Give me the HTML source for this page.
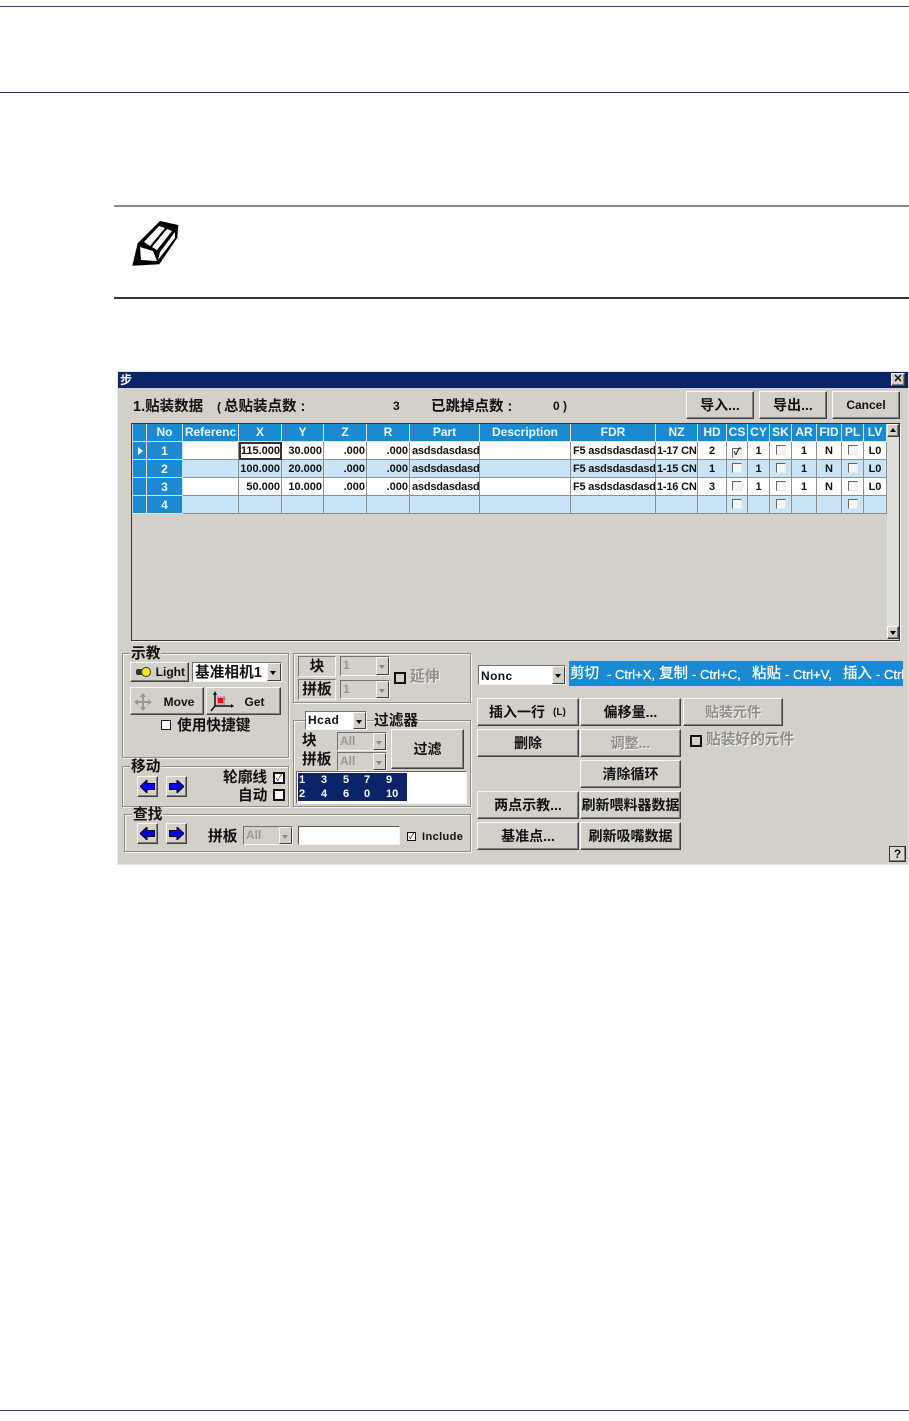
<!DOCTYPE html>
<html><head><meta charset="utf-8"><style>
html,body{margin:0;padding:0;background:#fff}
body{width:909px;height:1421px;position:relative;overflow:hidden;font-family:"Liberation Sans","Noto Sans CJK SC",sans-serif;color:#111}
.a,.t,.b,.sel,.cb,.g{position:absolute}
.t{white-space:nowrap;font-size:14.7px;line-height:16px}
.b{background:#d4d0c8;border:1px solid;border-color:#f8f8f4 #404040 #404040 #f8f8f4;box-shadow:inset -1px -1px 0 #808080;box-sizing:border-box;text-align:center;white-space:nowrap;font-size:14px;font-weight:bold;display:flex;align-items:center;justify-content:center;overflow:hidden}
.dis{color:#8f8d88;text-shadow:1px 1px 0 #f4f4f0}
.sel{background:#fff;border:1px solid;border-color:#707070 #f4f4f0 #f4f4f0 #707070;box-sizing:border-box;font-size:12px;font-weight:bold;line-height:17px;padding-left:2px;white-space:nowrap;overflow:hidden}
.sel.off{background:#d4d0c8;color:#99978f}
.sel i{position:absolute;right:0;top:0;bottom:0;width:13px;background:#d4d0c8;border:1px solid;border-color:#f4f4f0 #404040 #404040 #f4f4f0;box-sizing:border-box}
.sel i:after{content:"";position:absolute;left:2px;top:50%;margin-top:-1px;border:3px solid transparent;border-top:4px solid #000;border-bottom:0}
.sel.off i:after{border-top-color:#888}
.cb{width:10px;height:10px;border:2px solid #111;background:#fff;box-sizing:content-box}
.g{border:1px solid #8d8b85;box-shadow:1px 1px 0 #f4f4f0,inset 1px 1px 0 #f4f4f0;box-sizing:border-box}
table{position:absolute;left:133px;top:424px;border-collapse:separate;border-spacing:0;table-layout:fixed;width:754px;font-size:11px;font-weight:bold}
td{height:16px;padding:1px 0 0;border-right:1px solid #8a8f92;border-bottom:1px solid #8a8f92;white-space:nowrap;overflow:hidden;text-align:center;background:#fff;line-height:16px}
tr.h td{background:#1b8ad0;color:#eaf6ff;font-size:12px;border-color:#d4e4ee;height:17px;padding-top:0;line-height:17px}
tr.l td{background:#c9e4f4}
td.n{background:#1b8ad0!important;color:#eaf6ff;border-color:#d4e4ee;font-size:12px}
td.r{text-align:right;padding-right:1px}
td.s{text-align:left;padding-left:2px;font-size:11px;letter-spacing:-.2px}
.k{display:inline-block;width:8px;height:8px;border:1px solid;border-color:#666 #e8e8e8 #e8e8e8 #666;background:#f6f6f4;vertical-align:-1px;font-size:10px;line-height:8px;color:#222}
.w{position:absolute;top:1px;color:#fff;font-size:14.5px;line-height:25px;white-space:nowrap;-webkit-text-stroke:.3px #fff}
.w2{position:absolute;top:1px;color:#fff;font-size:13px;line-height:25px;white-space:nowrap;-webkit-text-stroke:.3px #fff}
</style></head><body>
<div class="a" style="left:0;top:6px;width:909px;height:1px;background:#3b3f7c"></div>
<div class="a" style="left:0;top:92px;width:909px;height:1px;background:#2c3070"></div>
<div class="a" style="left:0;top:1410px;width:909px;height:1px;background:#3b3f7c"></div>
<div class="a" style="left:114px;top:205px;width:795px;height:2px;background:#8a8a8a"></div>
<div class="a" style="left:114px;top:297px;width:795px;height:2px;background:#333"></div>

<svg class="a" style="left:125px;top:215px" width="60" height="58" viewBox="125 215 60 58">
<path d="M132.300 265.700L137.700 243.300L160 221L178.300 225L177.300 237.700L159.300 264.300Z" fill="#000"/>
<path d="M144 242L159 226L165 228L150 246Z M152 247L167 229L172 231L157 250Z M160 252L175 232L175 238L158 260Z M140 247L153 251L157 261L141 260Z" fill="#fff"/>
</svg>

<!-- window -->
<div class="a" style="left:117px;top:371px;width:792px;height:494px;background:#d4d0c8;box-shadow:inset 0 0 0 1px #e8e6e0"></div>
<div class="a" style="left:118px;top:372px;width:790px;height:16px;background:#0a2468"></div>
<div class="t" style="left:120px;top:372px;color:#fff;font-size:12px;font-weight:bold">步</div>
<div class="b" style="left:891px;top:373px;width:14px;height:13px;font-size:11px;line-height:11px">✕</div>

<div class="t" style="left:133px;top:399px;font-weight:bold;font-size:14.500px">1.贴装数据</div>
<div class="t" style="left:217px;top:399px;font-weight:bold;font-size:12px">(</div>
<div class="t" style="left:224px;top:399px;font-weight:bold;font-size:14.500px">总贴装点数 :</div>
<div class="t" style="left:393px;top:398px;font-weight:bold;font-size:12px">3</div>
<div class="t" style="left:431px;top:399px;font-weight:bold;font-size:14.500px">已跳掉点数 :</div>
<div class="t" style="left:553px;top:398px;font-weight:bold;font-size:12px">0 )</div>
<div class="b" style="left:686px;top:391px;width:68px;height:28px">导入...</div>
<div class="b" style="left:759px;top:391px;width:68px;height:28px">导出...</div>
<div class="b" style="left:832px;top:391px;width:68px;height:28px;font-size:12px">Cancel</div>

<!-- grid -->
<div class="a" style="left:131px;top:423px;width:769px;height:218px;border:1px solid #333;box-sizing:border-box;box-shadow:1px 1px 0 #f4f4f0"></div>
<table><colgroup><col style="width:14px"><col style="width:36px"><col style="width:56px"><col style="width:43px"><col style="width:42px"><col style="width:43px"><col style="width:43px"><col style="width:70px"><col style="width:91px"><col style="width:85px"><col style="width:42px"><col style="width:29px"><col style="width:21px"><col style="width:22px"><col style="width:22px"><col style="width:25px"><col style="width:25px"><col style="width:22px"><col style="width:23px"></colgroup>
<tr class="h"><td></td><td>No</td><td>Referenc</td><td>X</td><td>Y</td><td>Z</td><td>R</td><td>Part</td><td>Description</td><td>FDR</td><td>NZ</td><td>HD</td><td>CS</td><td>CY</td><td>SK</td><td>AR</td><td>FID</td><td>PL</td><td>LV</td></tr>
<tr><td class="n"></td><td class="n">1</td><td></td><td class="r" style="outline:2px solid #333;outline-offset:-2px">115.000</td><td class="r">30.000</td><td class="r">.000</td><td class="r">.000</td><td class="s">asdsdasdasd</td><td></td><td class="s">F5 asdsdasdasd</td><td class="s" style="padding-left:1px">1-17 CN</td><td>2</td><td><span class="k">✓</span></td><td>1</td><td><span class="k"></span></td><td>1</td><td>N</td><td><span class="k"></span></td><td>L0</td></tr>
<tr class="l"><td class="n"></td><td class="n">2</td><td></td><td class="r">100.000</td><td class="r">20.000</td><td class="r">.000</td><td class="r">.000</td><td class="s">asdsdasdasd</td><td></td><td class="s">F5 asdsdasdasd</td><td class="s" style="padding-left:1px">1-15 CN</td><td>1</td><td><span class="k"></span></td><td>1</td><td><span class="k"></span></td><td>1</td><td>N</td><td><span class="k"></span></td><td>L0</td></tr>
<tr><td class="n"></td><td class="n">3</td><td></td><td class="r">50.000</td><td class="r">10.000</td><td class="r">.000</td><td class="r">.000</td><td class="s">asdsdasdasd</td><td></td><td class="s">F5 asdsdasdasd</td><td class="s" style="padding-left:1px">1-16 CN</td><td>3</td><td><span class="k"></span></td><td>1</td><td><span class="k"></span></td><td>1</td><td>N</td><td><span class="k"></span></td><td>L0</td></tr>
<tr class="l"><td class="n"></td><td class="n">4</td><td></td><td></td><td></td><td></td><td></td><td></td><td></td><td></td><td></td><td></td><td><span class="k"></span></td><td></td><td><span class="k"></span></td><td></td><td></td><td><span class="k"></span></td><td></td></tr>
</table>
<div class="a" style="left:138px;top:447px;border:4px solid transparent;border-left:5px solid #fff;border-right:0"></div>
<!-- scrollbar -->
<div class="a" style="left:887px;top:424px;width:12px;height:215px;background:#e0ded9"></div>
<div class="b" style="left:887px;top:424px;width:12px;height:13px"></div>
<div class="b" style="left:887px;top:626px;width:12px;height:13px"></div>
<div class="a" style="left:890px;top:428px;border:3px solid transparent;border-bottom:4px solid #000;border-top:0"></div>
<div class="a" style="left:890px;top:631px;border:3px solid transparent;border-top:4px solid #000;border-bottom:0"></div>

<!-- 示教 group -->
<div class="g" style="left:122px;top:653px;width:167px;height:105px"></div>
<div class="t" style="left:130px;top:646px;background:#d4d0c8;font-weight:bold;padding:0 1px">示教</div>
<div class="b" style="left:130px;top:662px;width:59px;height:20px;font-size:12px;justify-content:flex-end;padding-right:3px">Light</div>
<div class="a" style="left:136px;top:669px;width:7px;height:6px;background:#333;border-radius:2px"></div>
<div class="a" style="left:141px;top:667px;width:10px;height:10px;background:#f2ea10;border-radius:50%;border:1px solid #333;box-sizing:border-box"></div>
<div class="sel" style="left:192px;top:662px;width:90px;height:20px;font-size:14.700px;line-height:20px;padding-left:2px">基准相机1<i style="width:14px"></i></div>
<div class="b" style="left:130px;top:687px;width:74px;height:28px;font-size:12px;padding:1px 0 0 24px">Move</div>
<svg class="a" style="left:134px;top:693px" width="18" height="18" viewBox="0 0 18 18" fill="none" stroke="#9a9892" stroke-width="2"><path d="M9 2V16M2 9H16"/><path d="M9 0L6 4H12ZM9 18L6 14H12ZM0 9L4 6V12ZM18 9L14 6V12Z" fill="#9a9892" stroke="none"/></svg>
<div class="b" style="left:206px;top:687px;width:75px;height:28px;font-size:12px;padding:1px 0 0 22px">Get</div>
<svg class="a" style="left:210px;top:691px" width="24" height="22" viewBox="0 0 24 22" fill="none" stroke="#111" stroke-width="1.5"><path d="M5 2V15L1 20M5 15H21"/><path d="M21 13L24 15L21 17ZM3 4L5 0L7 4Z" fill="#111" stroke="none"/><path d="M8 5V14M11 5V14M14 5V14M7 8H16" stroke="#777" stroke-width="1"/><rect x="8" y="7" width="5" height="5" fill="#f00" stroke="none"/></svg>
<div class="cb" style="left:161px;top:720px;width:8px;height:8px;border-width:1.500px"></div>
<div class="t" style="left:177px;top:718px;font-weight:bold">使用快捷键</div>

<!-- 移动 group -->
<div class="g" style="left:122px;top:766px;width:167px;height:41px"></div>
<div class="t" style="left:130px;top:759px;background:#d4d0c8;font-weight:bold;padding:0 1px">移动</div>
<div class="b" style="left:137px;top:776px;width:21px;height:21px;font-size:0"><svg width="15" height="13" viewBox="0 0 15 13"><path d="M0 6.500L7 0V3.500H15V9.500H7V13Z" fill="#0000e0" stroke="#000"/></svg></div>
<div class="b" style="left:166px;top:776px;width:21px;height:21px;font-size:0"><svg width="15" height="13" viewBox="0 0 15 13"><path d="M15 6.500L8 0V3.500H0V9.500H8V13Z" fill="#0000e0" stroke="#000"/></svg></div>
<div class="t" style="left:223px;top:770px;font-weight:bold">轮廓线</div>
<div class="cb" style="left:273px;top:772px;width:8px;height:8px;font-size:9px;line-height:8px;text-align:center">✓</div>
<div class="t" style="left:238px;top:788px;font-weight:bold">自动</div>
<div class="cb" style="left:273px;top:789px;width:8px;height:8px"></div>

<!-- 查找 group -->
<div class="g" style="left:124px;top:814px;width:347px;height:38px"></div>
<div class="t" style="left:132px;top:807px;background:#d4d0c8;font-weight:bold;padding:0 1px">查找</div>
<div class="b" style="left:137px;top:823px;width:21px;height:21px;font-size:0"><svg width="15" height="13" viewBox="0 0 15 13"><path d="M0 6.500L7 0V3.500H15V9.500H7V13Z" fill="#0000e0" stroke="#000"/></svg></div>
<div class="b" style="left:166px;top:823px;width:21px;height:21px;font-size:0"><svg width="15" height="13" viewBox="0 0 15 13"><path d="M15 6.500L8 0V3.500H0V9.500H8V13Z" fill="#0000e0" stroke="#000"/></svg></div>
<div class="t" style="left:208px;top:829px;font-weight:bold">拼板</div>
<div class="sel off" style="left:243px;top:826px;width:50px;height:19px">All<i></i></div>
<div class="a" style="left:298px;top:826px;width:102px;height:19px;background:#fff;border:1px solid;border-color:#555 #f4f4f0 #f4f4f0 #555;box-sizing:border-box"></div>
<div class="cb" style="left:407px;top:832px;width:7px;height:7px;border-width:1.500px;font-size:8px;line-height:7px;text-align:center">✓</div>
<div class="t" style="left:422px;top:829px;font-size:11px;font-weight:bold;letter-spacing:.4px">Include</div>

<!-- 块 group -->
<div class="g" style="left:293px;top:653px;width:178px;height:50px"></div>
<div class="a" style="left:298px;top:656px;width:38px;height:21px;border:1px solid;border-color:#777 #f4f4f0 #f4f4f0 #777;box-sizing:border-box;text-align:center;font-size:14.700px;font-weight:bold;line-height:20px">块</div>
<div class="a" style="left:298px;top:679px;width:38px;height:21px;border:1px solid;border-color:#777 #f4f4f0 #f4f4f0 #777;box-sizing:border-box;text-align:center;font-size:14.700px;font-weight:bold;line-height:20px">拼板</div>
<div class="sel off" style="left:340px;top:656px;width:50px;height:20px;font-size:12px">1<i></i></div>
<div class="sel off" style="left:340px;top:680px;width:50px;height:19px;font-size:12px">1<i></i></div>
<div class="cb" style="left:394px;top:672px;width:8px;height:8px;background:none"></div>
<div class="t dis" style="left:410px;top:669px;font-weight:bold">延伸</div>

<!-- 过滤器 group -->
<div class="g" style="left:293px;top:720px;width:178px;height:87px"></div>
<div class="sel" style="left:305px;top:711px;width:62px;height:19px;letter-spacing:.5px">Hcad<i></i></div>
<div class="t" style="left:374px;top:713px;background:#d4d0c8;font-weight:bold">过滤器</div>
<div class="t" style="left:302px;top:733px;font-weight:bold">块</div>
<div class="t" style="left:302px;top:752px;font-weight:bold">拼板</div>
<div class="sel off" style="left:337px;top:732px;width:50px;height:19px">All<i></i></div>
<div class="sel off" style="left:337px;top:752px;width:50px;height:19px">All<i></i></div>
<div class="b" style="left:391px;top:729px;width:73px;height:40px">过滤</div>
<div class="a" style="left:296px;top:771px;width:171px;height:33px;background:#fff;border:1px solid;border-color:#666 #f4f4f0 #f4f4f0 #666;box-sizing:border-box"></div>
<div class="a" style="left:298px;top:773px;width:109px;height:28px;background:#0a2468"></div>
<div class="t" style="left:299px;top:773px;color:#fff;font-size:11px;font-weight:bold;line-height:14px">1</div><div class="t" style="left:321px;top:773px;color:#fff;font-size:11px;font-weight:bold;line-height:14px">3</div><div class="t" style="left:343px;top:773px;color:#fff;font-size:11px;font-weight:bold;line-height:14px">5</div><div class="t" style="left:364px;top:773px;color:#fff;font-size:11px;font-weight:bold;line-height:14px">7</div><div class="t" style="left:386px;top:773px;color:#fff;font-size:11px;font-weight:bold;line-height:14px">9</div>
<div class="t" style="left:299px;top:787px;color:#fff;font-size:11px;font-weight:bold;line-height:14px">2</div><div class="t" style="left:321px;top:787px;color:#fff;font-size:11px;font-weight:bold;line-height:14px">4</div><div class="t" style="left:343px;top:787px;color:#fff;font-size:11px;font-weight:bold;line-height:14px">6</div><div class="t" style="left:364px;top:787px;color:#fff;font-size:11px;font-weight:bold;line-height:14px">0</div><div class="t" style="left:386px;top:787px;color:#fff;font-size:11px;font-weight:bold;line-height:14px">10</div>

<!-- right side -->
<div class="sel" style="left:478px;top:665px;width:88px;height:20px;letter-spacing:.4px;line-height:20px">Nonc<i></i></div>
<div class="a" style="left:569px;top:661px;width:334px;height:25px;background:#1b8ad0"></div>
<div class="a" style="left:569px;top:661px;width:334px;height:25px;overflow:hidden">
<span class="w" style="left:1px">剪切</span><span class="w2" style="left:38px">- Ctrl+X,</span>
<span class="w" style="left:90px">复制</span><span class="w2" style="left:123px">- Ctrl+C,</span>
<span class="w" style="left:183px">粘贴</span><span class="w2" style="left:216px">- Ctrl+V,</span>
<span class="w" style="left:274px">插入</span><span class="w2" style="left:307px">- Ctrl</span>
</div>
<div class="b" style="left:477px;top:698px;width:102px;height:28px;justify-content:flex-start;padding-left:11px">插入一行<span style="font-size:10px;margin-left:8px">(L)</span></div>
<div class="b" style="left:580px;top:698px;width:101px;height:28px">偏移量...</div>
<div class="b dis" style="left:683px;top:698px;width:100px;height:28px">贴装元件</div>
<div class="b" style="left:477px;top:729px;width:102px;height:28px">删除</div>
<div class="b dis" style="left:580px;top:729px;width:101px;height:28px">调整...</div>
<div class="cb" style="left:690px;top:735px;width:8px;height:8px;background:none"></div>
<div class="t dis" style="left:706px;top:732px;font-weight:bold">贴装好的元件</div>
<div class="b" style="left:580px;top:760px;width:101px;height:28px">清除循环</div>
<div class="b" style="left:477px;top:791px;width:102px;height:28px">两点示教...</div>
<div class="b" style="left:580px;top:791px;width:101px;height:28px">刷新喂料器数据</div>
<div class="b" style="left:477px;top:822px;width:102px;height:28px">基准点...</div>
<div class="b" style="left:580px;top:822px;width:101px;height:28px">刷新吸嘴数据</div>
<div class="b" style="left:889px;top:846px;width:17px;height:16px;font-size:12px;background:#dcd9d2;border-color:#333">?</div>
</body></html>
